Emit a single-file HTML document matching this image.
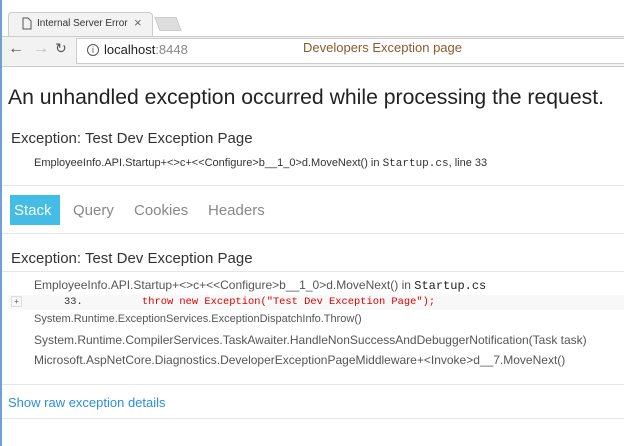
<!DOCTYPE html>
<html><head><style>
*{margin:0;padding:0;box-sizing:border-box}
body{width:624px;height:446px;overflow:hidden;background:#fff;font-family:"Liberation Sans",sans-serif;position:relative}
.abs{position:absolute;white-space:nowrap}
.hr{position:absolute;left:2px;right:0;height:1px;background:#e6e6e6}
.mono{font-family:"Liberation Mono",monospace}
</style></head><body>
<div class="abs" style="left:0;top:0;width:2px;height:446px;background:#6fa0d8;z-index:5"></div>
<div class="abs" style="left:8px;top:12px;width:145px;height:25px;background:#f2f2f2;border:1px solid #ccc;border-bottom:none;border-radius:4px 4px 0 0"></div>
<svg class="abs" style="left:22px;top:17px" width="10" height="13"><path d="M1 1h5l3 3v8H1z" fill="none" stroke="#555"/></svg>
<div class="abs" style="left:37px;top:18px;font-size:10px;color:#333">Internal Server Error</div>
<div class="abs" style="left:134px;top:15px;font-size:13px;color:#666">×</div>
<div class="abs" style="left:157px;top:17px;width:22px;height:14px;background:#ddd;border:1px solid #ccc;transform:skewX(20deg)"></div>
<div class="abs" style="left:2px;top:36px;width:622px;height:31px;background:#f2f2f2;border-top:1px solid #ccc;border-bottom:1px solid #ccc"></div>
<div class="abs" style="left:8px;top:40px;font-size:16px;color:#555">←</div>
<div class="abs" style="left:33px;top:40px;font-size:16px;color:#bbb">→</div>
<div class="abs" style="left:55px;top:40px;font-size:14px;color:#555">↻</div>
<div class="abs" style="left:76px;top:38px;width:548px;height:26px;background:#fff;border:1px solid #ccc;border-right:none"></div>
<div class="abs" style="left:87px;top:44px;width:12px;height:12px;border:1.3px solid #555;border-radius:50%;font-size:9px;line-height:10px;text-align:center;color:#555">i</div>
<div class="abs" style="left:104px;top:42px;font-size:13px;color:#222">localhost<span style="color:#888">:8448</span></div>
<div class="abs" style="left:303px;top:40px;font-size:13px;color:#8a5a2a">Developers Exception page</div>

<div class="abs" style="left:8px;top:86px;font-size:21.2px;color:#222">An unhandled exception occurred while processing the request.</div>
<div class="abs" style="left:11px;top:130px;font-size:15px;color:#333">Exception: Test Dev Exception Page</div>
<div class="abs" style="left:34px;top:157px;font-size:11px;color:#333">EmployeeInfo.API.Startup+&lt;&gt;c+&lt;&lt;Configure&gt;b__1_0&gt;d.MoveNext() in <span class="mono">Startup.cs</span>, line 33</div>
<div class="hr" style="top:185px"></div>
<div class="abs" style="left:10px;top:195px;width:50px;height:30px;background:#44bde6"></div>
<div class="abs" style="left:14px;top:202px;font-size:15px;color:#fff">Stack</div>
<div class="abs" style="left:73px;top:202px;font-size:15px;color:#888">Query</div>
<div class="abs" style="left:134px;top:202px;font-size:15px;color:#888">Cookies</div>
<div class="abs" style="left:208px;top:202px;font-size:15px;color:#888">Headers</div>
<div class="hr" style="top:233px"></div>
<div class="abs" style="left:11px;top:250px;font-size:15px;color:#333">Exception: Test Dev Exception Page</div>
<div class="hr" style="top:271px"></div>
<div class="abs" style="left:34px;top:278px;font-size:12px;color:#555">EmployeeInfo.API.Startup+&lt;&gt;c+&lt;&lt;Configure&gt;b__1_0&gt;d.MoveNext() in <span class="mono" style="color:#222">Startup.cs</span></div>
<div class="abs" style="left:8px;top:295px;width:616px;height:15px;background:#f8f8f8"></div>
<div class="abs" style="left:11px;top:296px;width:11px;height:11px;border:1px solid #ddd;font-size:8px;line-height:9px;text-align:center;color:#555">+</div>
<div class="abs mono" style="left:64px;top:296px;font-size:10.4px;color:#333">33.</div>
<div class="abs mono" style="left:142px;top:296px;font-size:10.4px;color:#d00">throw new Exception("Test Dev Exception Page");</div>
<div class="abs" style="left:34px;top:313px;font-size:11px;color:#555">System.Runtime.ExceptionServices.ExceptionDispatchInfo.Throw()</div>
<div class="abs" style="left:34px;top:333px;font-size:12px;color:#555">System.Runtime.CompilerServices.TaskAwaiter.HandleNonSuccessAndDebuggerNotification(Task task)</div>
<div class="abs" style="left:34px;top:353px;font-size:12px;color:#555">Microsoft.AspNetCore.Diagnostics.DeveloperExceptionPageMiddleware+&lt;Invoke&gt;d__7.MoveNext()</div>
<div class="hr" style="top:384px"></div>
<div class="abs" style="left:8px;top:395px;font-size:13px;color:#2a8fd6">Show raw exception details</div>
<div class="hr" style="top:418px"></div>
</body></html>
